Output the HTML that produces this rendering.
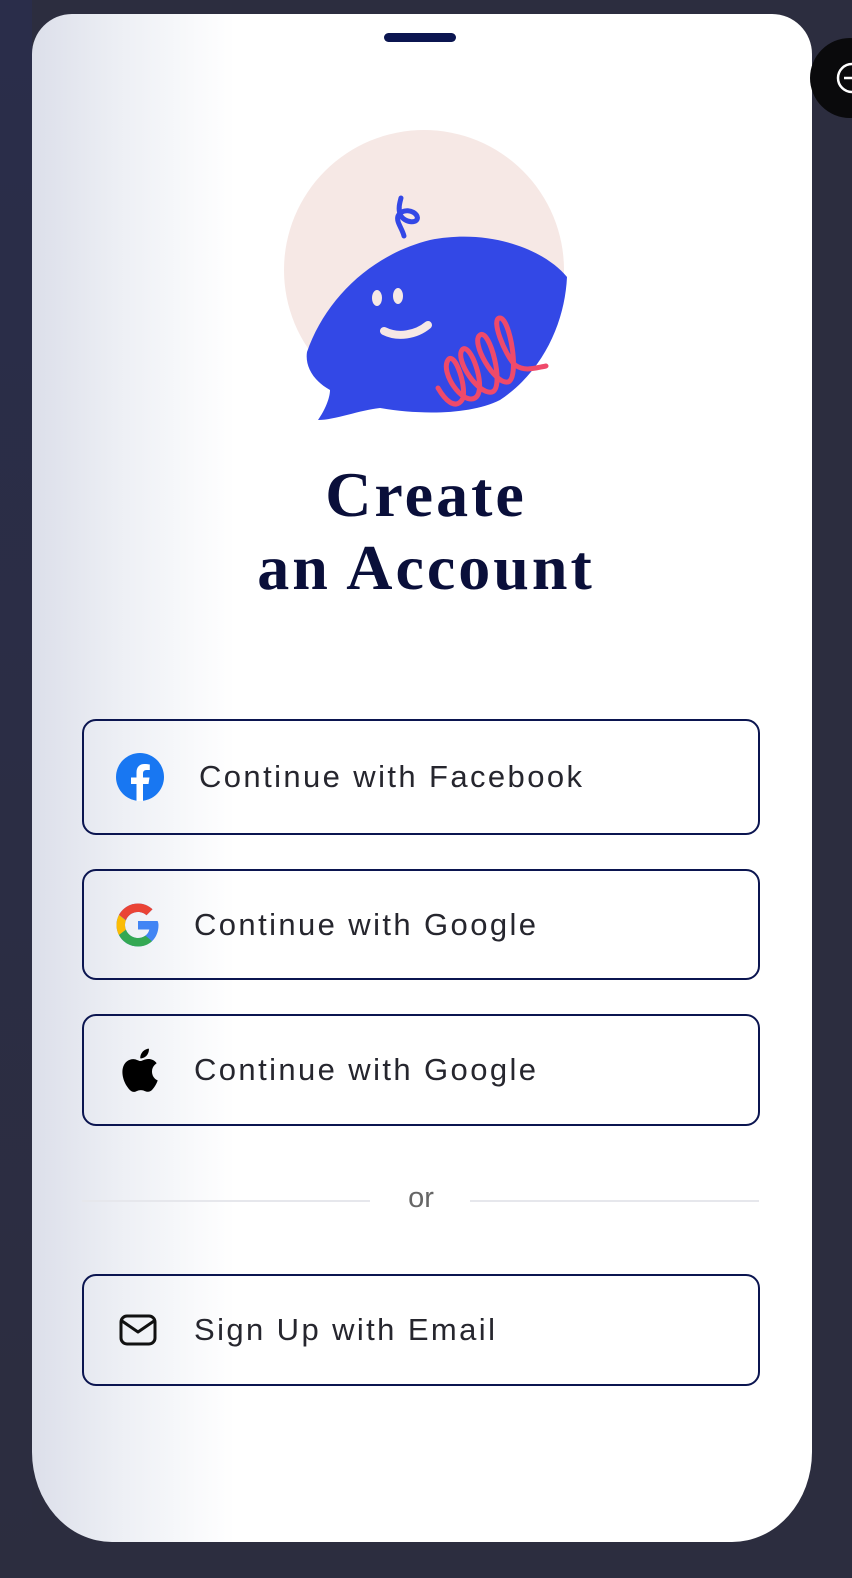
<!DOCTYPE html>
<html><head><meta charset="utf-8">
<style>
html,body{margin:0;padding:0}
body{width:852px;height:1578px;background:#2c2d3f;position:relative;overflow:hidden;font-family:"Liberation Sans",sans-serif}
.bgl{position:absolute;left:0;top:0;width:32px;height:1578px;background:linear-gradient(#2a2d4a,#2c2d3f)}
.card{position:absolute;left:32px;top:14px;width:780px;height:1528px;border-radius:40px 40px 80px 80px / 40px 40px 90px 90px;background:linear-gradient(90deg,#dcdfea 0%,#eef0f5 12%,#fff 26%,#fff 100%);overflow:hidden}
.handle{position:absolute;left:384px;top:33px;width:72px;height:9px;border-radius:5px;background:#0b1550}
.fab{position:absolute;left:810px;top:38px;width:80px;height:80px;border-radius:50%;background:#0a0a0c}
h1{position:absolute;left:0;width:852px;top:458px;margin:0;text-align:center;font-family:"Liberation Serif",serif;font-weight:700;font-size:64px;line-height:73px;color:#0a0f3a;letter-spacing:3px}
.btn{position:absolute;left:82px;width:674px;border:2px solid #0b1550;border-radius:14px;box-sizing:content-box}
.btn span{position:absolute;top:50%;transform:translateY(-50%);font-size:31px;color:#26262e;letter-spacing:2.4px;white-space:nowrap}
.btn svg{position:absolute;top:50%;transform:translateY(-50%)}
.line{position:absolute;top:1200px;height:2px;background:#e6e7ec}
.or{position:absolute;top:1182px;left:400px;width:42px;text-align:center;font-size:29px;color:#666}
</style></head><body>
<div class="bgl"></div>
<div class="card"></div>
<div class="handle"></div>
<div class="fab"><svg width="80" height="80"><circle cx="42" cy="40" r="14" fill="none" stroke="#fff" stroke-width="2.5"/><line x1="34" y1="40" x2="46" y2="40" stroke="#fff" stroke-width="2.5"/></svg></div>

<svg style="position:absolute;left:0;top:0" width="852" height="440">
<circle cx="424" cy="270" r="140" fill="#f6e8e5"/>
<path d="M307 352 C325 300 370 255 430 240 C490 228 545 250 567 277 C565 320 545 370 500 400 C470 415 420 415 380 408 C360 410 335 420 318 420 C325 410 330 398 330 390 C312 380 305 365 307 352 Z" fill="#3348e6"/>
<path d="M404 236 C402 228 396 222 398 216 C402 208 414 210 417 216 C420 224 404 224 400 214 C398 208 400 202 401 198" fill="none" stroke="#3348e6" stroke-width="5" stroke-linecap="round"/>
<ellipse cx="377" cy="298" rx="5" ry="8" fill="#f6e8e5"/>
<ellipse cx="398" cy="296" rx="5" ry="8" fill="#f6e8e5"/>
<path d="M384 331 C398 338 416 335 428 325" fill="none" stroke="#f6e8e5" stroke-width="8" stroke-linecap="round"/>
<path d="M438 388 C445 400 455 410 462 400 C468 390 455 350 448 360 C440 372 462 405 475 398 C488 390 470 340 462 350 C455 360 478 395 492 392 C505 388 490 328 480 335 C470 342 495 385 508 382 C520 378 510 318 500 318 C490 318 505 355 515 365 C525 372 535 368 546 366" fill="none" stroke="#ef4a6a" stroke-width="5" stroke-linecap="round"/>
</svg>

<h1>Create<br>an Account</h1>

<div class="btn" style="top:719px;height:112px">
<svg style="left:32px" width="48" height="48" viewBox="0 0 48 48"><circle cx="24" cy="24" r="24" fill="#1877f2"/><path d="M27 48 V31 H32.5 L33.5 24.5 H27 V20.5 C27 18.5 28 17 30.5 17 H33.8 V11.5 C32.5 11.3 30.5 11 28.5 11 C23.5 11 20.5 14 20.5 19.5 V24.5 H15 V31 H20.5 V48 Z" fill="#fff"/></svg>
<span style="left:115px">Continue with Facebook</span></div>

<div class="btn" style="top:869px;height:107px">
<svg style="left:30px" width="48" height="48" viewBox="0 0 48 48"><path d="M43.6 20H24v8.5h11.3C34.2 33.6 29.7 37 24 37c-7.2 0-13-5.8-13-13s5.8-13 13-13c3.3 0 6.2 1.2 8.5 3.2l6-6C34.7 4.7 29.6 2.5 24 2.5 12.1 2.5 2.5 12.1 2.5 24S12.1 45.5 24 45.5c11 0 20.5-8 20.5-21.5 0-1.4-.4-2.8-.9-4z" fill="#4285f4"/><path d="M5 13.9l7 5.1C13.8 14.4 18.5 11 24 11c3.3 0 6.2 1.2 8.5 3.2l6-6C34.7 4.7 29.6 2.5 24 2.5 15.7 2.5 8.6 7.200 5 13.9z" fill="#ea4335"/><path d="M24 45.5c5.5 0 10.4-2 14-5.400l-6.600-5.500C29.400 36.200 26.800 37 24 37c-5.600 0-10.300-3.500-12.100-8.500l-7 5.400C8.400 40.800 15.600 45.500 24 45.500z" fill="#34a853"/><path d="M5 13.900C3.400 16.900 2.500 20.300 2.500 24s.9 7.100 2.400 10l7-5.400C11.300 27.200 11 25.600 11 24s.3-3.200.9-4.600z" fill="#fbbc05"/></svg>
<span style="left:110px">Continue with Google</span></div>

<div class="btn" style="top:1014px;height:108px">
<svg style="left:32px" width="44" height="48" viewBox="0 0 44 48"><path d="M36 25.5c0-5.500 4.500-8 4.700-8.200-2.600-3.800-6.600-4.300-8-4.300-3.400-.3-6.600 2-8.300 2-1.700 0-4.400-2-7.200-1.900-3.700.1-7.100 2.100-9 5.400-3.800 6.700-1 16.500 2.800 21.900 1.800 2.600 4 5.600 6.800 5.500 2.700-.1 3.800-1.800 7.100-1.800 3.300 0 4.200 1.800 7.200 1.700 3-.1 4.800-2.700 6.600-5.300 2.100-3 2.900-5.900 3-6.100-.1 0-5.700-2.200-5.700-8.900zM30.700 9.500c1.500-1.800 2.500-4.400 2.200-6.900-2.200.1-4.800 1.400-6.300 3.200-1.400 1.600-2.600 4.200-2.300 6.600 2.400.2 4.900-1.200 6.400-2.900z" fill="#000"/></svg>
<span style="left:110px">Continue with Google</span></div>

<div class="line" style="left:82px;width:288px"></div>
<div class="line" style="left:470px;width:289px"></div>
<div class="or">or</div>

<div class="btn" style="top:1274px;height:108px">
<svg style="left:34px" width="40" height="34" viewBox="0 0 40 34"><rect x="3" y="3" width="34" height="28" rx="6" fill="none" stroke="#111" stroke-width="3"/><path d="M4 8 L20 19 L36 8" fill="none" stroke="#111" stroke-width="3" stroke-linejoin="round"/></svg>
<span style="left:110px">Sign Up with Email</span></div>
</body></html>
